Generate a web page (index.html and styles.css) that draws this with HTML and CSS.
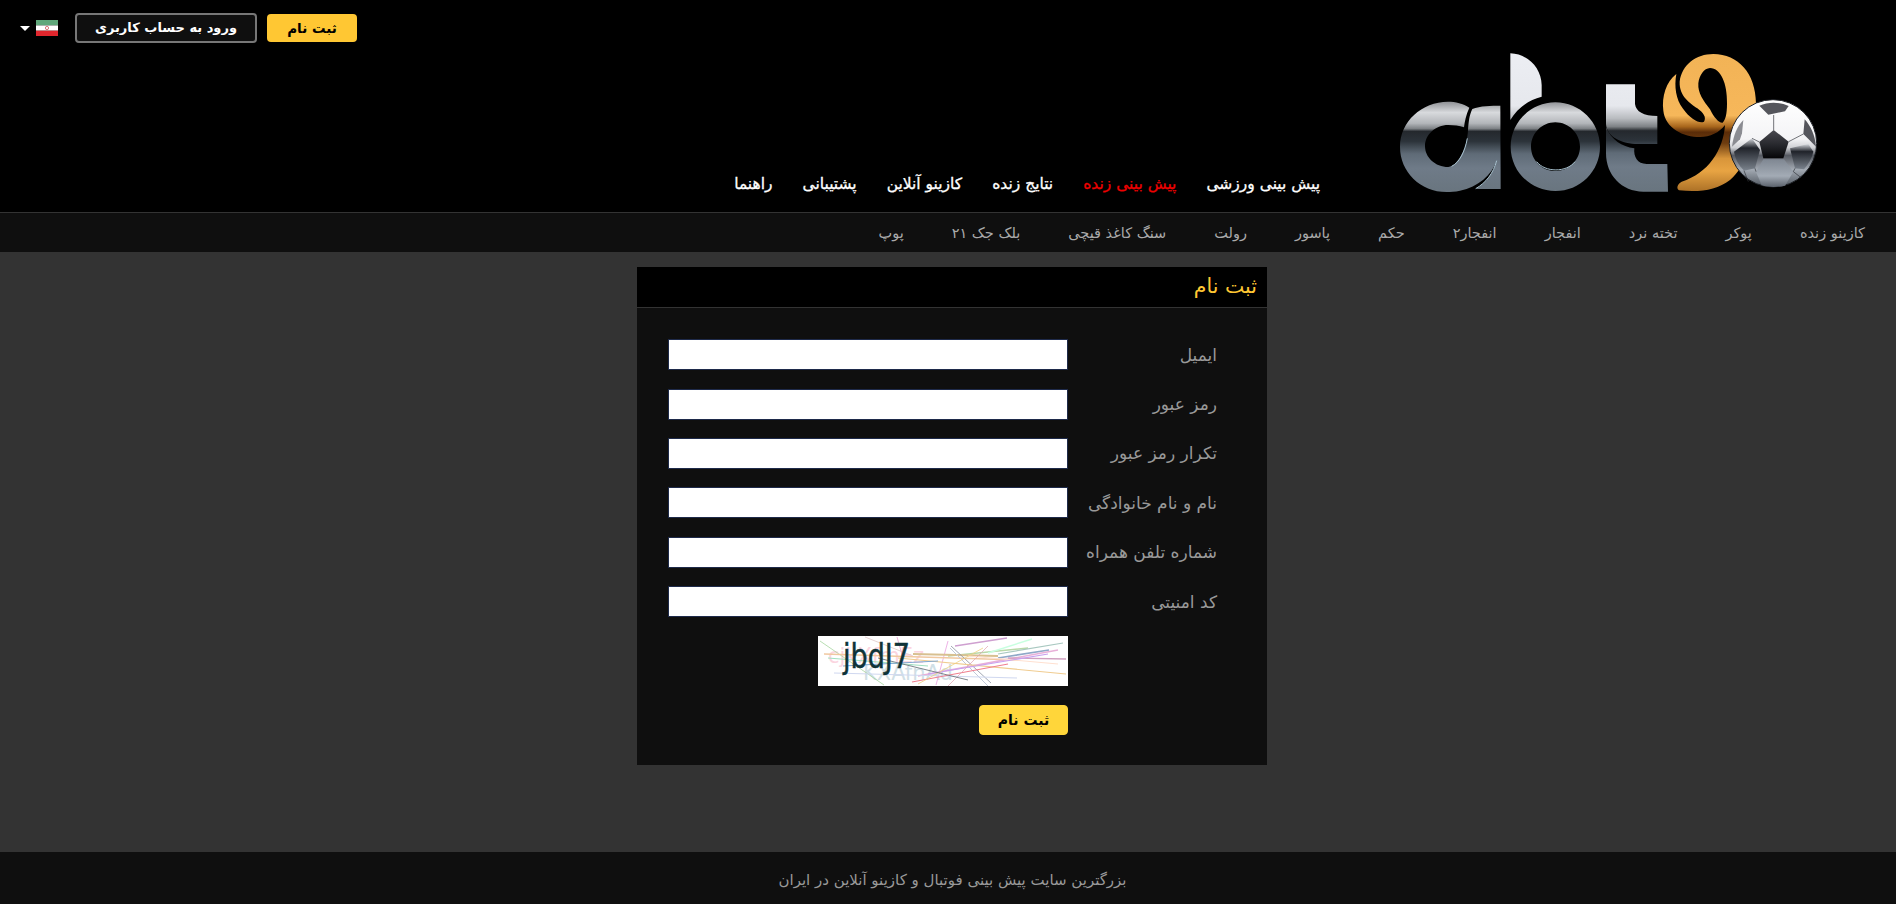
FILE: index.html
```html
<!DOCTYPE html>
<html lang="fa" dir="rtl">

<head>
    <meta charset="UTF-8">
    <title>ثبت نام</title>
    <link rel="stylesheet" href="styles.css">
</head>

<body>
    <header class="top">
        <a class="logo" href="#">
            <svg width="460" height="170" viewBox="0 0 1380 510">
                <defs>
                    <linearGradient id="chrome" gradientUnits="userSpaceOnUse" x1="0" y1="40" x2="0" y2="455">
                        <stop offset="0" stop-color="#eceef3"/>
                        <stop offset="0.38" stop-color="#e6e8ed"/>
                        <stop offset="0.47" stop-color="#b9bcc0"/>
                        <stop offset="0.53" stop-color="#7d8185"/>
                        <stop offset="0.56" stop-color="#24282d"/>
                        <stop offset="0.63" stop-color="#2c333a"/>
                        <stop offset="0.72" stop-color="#5f6b77"/>
                        <stop offset="0.82" stop-color="#6f7b88"/>
                        <stop offset="1" stop-color="#69757f"/>
                    </linearGradient>
                    <linearGradient id="ring" gradientUnits="userSpaceOnUse" x1="0" y1="185" x2="0" y2="455">
                        <stop offset="0" stop-color="#8e9094"/>
                        <stop offset="0.12" stop-color="#d8dadd"/>
                        <stop offset="0.24" stop-color="#b3b6ba"/>
                        <stop offset="0.3" stop-color="#7d8185"/>
                        <stop offset="0.33" stop-color="#24282d"/>
                        <stop offset="0.44" stop-color="#2c333a"/>
                        <stop offset="0.58" stop-color="#5f6b77"/>
                        <stop offset="0.74" stop-color="#6f7b88"/>
                        <stop offset="1" stop-color="#69757f"/>
                    </linearGradient>
                    <linearGradient id="gold" gradientUnits="userSpaceOnUse" x1="0" y1="40" x2="0" y2="455">
                        <stop offset="0" stop-color="#f2b356"/>
                        <stop offset="0.45" stop-color="#f6b75a"/>
                        <stop offset="0.53" stop-color="#a8661c"/>
                        <stop offset="0.57" stop-color="#5a2c08"/>
                        <stop offset="0.65" stop-color="#6e3d10"/>
                        <stop offset="0.76" stop-color="#d8953a"/>
                        <stop offset="0.85" stop-color="#e8a443"/>
                        <stop offset="1" stop-color="#ab7026"/>
                    </linearGradient>
                    <linearGradient id="ballfill" x1="0" y1="0" x2="0" y2="1">
                        <stop offset="0" stop-color="#ffffff"/>
                        <stop offset="0.45" stop-color="#f4f4f6"/>
                        <stop offset="0.55" stop-color="#cfd0d4"/>
                        <stop offset="0.64" stop-color="#565a62"/>
                        <stop offset="0.8" stop-color="#a3aab3"/>
                        <stop offset="1" stop-color="#4e555e"/>
                    </linearGradient>
                    <linearGradient id="patch" x1="0" y1="0" x2="0" y2="1">
                        <stop offset="0" stop-color="#4a4a50"/>
                        <stop offset="0.55" stop-color="#25262b"/>
                        <stop offset="1" stop-color="#050507"/>
                    </linearGradient>
                    <linearGradient id="patch2" x1="0" y1="0" x2="0" y2="1">
                        <stop offset="0" stop-color="#d8dbe0"/>
                        <stop offset="0.3" stop-color="#20232a"/>
                        <stop offset="1" stop-color="#7b838d"/>
                    </linearGradient>
                    <linearGradient id="patch3" x1="0" y1="0" x2="0" y2="1">
                        <stop offset="0" stop-color="#7f8792"/>
                        <stop offset="0.6" stop-color="#a3abb5"/>
                        <stop offset="1" stop-color="#5b626c"/>
                    </linearGradient>
                </defs>

                <!-- a -->
                <path fill="url(#ring)" fill-rule="evenodd" d="M204 185C226 185 250 190 268 203L277 207C300 197 335 197 361 197L362 447L287 447C318 428 340 400 350 362C335 405 295 440 240 452C225 455 212 456 200 456C120 456 60 395 60 320C60 245 125 185 204 185ZM205 255C165 255 135 285 135 318C135 352 165 381 205 381C235 378 262 320 264 270C266 245 268 225 277 207L268 203C258 225 254 245 252 262C238 257 222 255 205 255Z"/>
                <path fill="none" stroke="#a9c3d0" stroke-width="3" d="M287 446C318 428 340 400 350 362M215 379C238 368 255 335 262 295"/>

                <!-- b -->
                <path fill="url(#chrome)" d="M391 40C445 42 484 85 485 135L485 170C445 180 412 205 391 240Z"/>
                <path fill="url(#ring)" fill-rule="evenodd" d="M526 187C600 187 660 247 660 320C660 394 600 453 526 453C452 453 392 394 392 320C392 247 452 187 526 187ZM526 247C486 247 453 280 453 320C453 360 486 393 526 393C566 393 600 360 600 320C600 280 566 247 526 247Z"/>
                <path fill="none" stroke="#a9c3d0" stroke-width="3" d="M470 365C495 398 560 398 585 365"/>

                <!-- t -->
                <path fill="url(#chrome)" d="M678 133H765V192C768 215 790 228 832 228V312H775C725 312 680 290 678 252Z"/>
                <path fill="url(#chrome)" d="M678 262C695 300 725 320 763 325C760 350 772 372 800 372H862L864 455H790C725 455 678 405 678 340Z"/>

                <!-- 9 -->
                <path fill="url(#gold)" fill-rule="evenodd" d="M889 102C858 125 845 170 850 212C856 265 910 291 960 291C990 291 1018 278 1035 255C1030 330 985 400 905 425C892 432 888 445 897 451C960 458 1010 450 1050 420C1100 380 1130 280 1128 190C1127 100 1075 42 1000 42C948 42 905 75 899 125C897 170 932 190 952 205C970 218 980 232 972 245C960 252 932 240 908 205C888 178 882 140 889 102ZM990 84C1022 84 1042 130 1041 190C1041 225 1036 240 1028 248C1018 250 1003 235 990 208C970 182 953 160 955 130C958 105 972 85 990 84Z"/>

                <!-- ball -->
                <circle cx="1179" cy="310" r="131" fill="url(#ballfill)" stroke="#1c1f24" stroke-width="3"/>
                <path fill="url(#patch)" d="M1181 270L1226 305L1210 355H1150L1138 306Z"/>
                <path fill="#55565c" d="M1138 197C1165 185 1198 185 1226 198L1215 214L1165 224Z"/>
                <path fill="#55565c" d="M1274 238C1292 258 1305 285 1308 320L1286 298L1270 282Z"/>
                <path fill="#8b8c92" d="M1090 240C1072 258 1060 285 1056 320L1080 298L1086 280Z"/>
                <path fill="url(#patch2)" d="M1062 335L1116 295L1140 330L1125 385L1092 392C1075 375 1065 355 1062 335Z"/>
                <path fill="url(#patch3)" d="M1150 358H1212L1240 395L1215 437C1190 443 1165 442 1145 436L1128 395Z"/>
                <path fill="url(#patch2)" d="M1230 325L1285 312L1300 335C1296 355 1285 372 1272 388L1245 385Z"/>
                <path fill="none" stroke="#30333a" stroke-width="2" d="M1181 270L1181 225M1226 305L1270 282M1138 306L1116 295M1125 385L1128 395M1240 395L1245 385M1092 392L1105 425M1240 395L1262 412"/>
            </svg>
        </a>

        <nav class="main-nav">
            <a href="#">پیش بینی ورزشی</a>
            <a href="#" class="live">پیش بینی زنده</a>
            <a href="#">نتایج زنده</a>
            <a href="#">کازینو آنلاین</a>
            <a href="#">پشتیبانی</a>
            <a href="#">راهنما</a>
        </nav>

        <div class="actions">
            <a href="#" class="btn btn-yellow">ثبت نام</a>
            <a href="#" class="btn btn-dark">ورود به حساب کاربری</a>
            <svg class="flag" width="22" height="16" viewBox="0 0 22 16">
                <rect width="22" height="5.4" fill="#5fa77a"/>
                <rect y="5.4" width="22" height="5.3" fill="#ffffff"/>
                <rect y="10.7" width="22" height="5.3" fill="#e0262d"/>
                <circle cx="11" cy="8" r="1.6" fill="none" stroke="#d9747a" stroke-width="1"/>
            </svg>
            <span class="caret"></span>
        </div>
    </header>

    <nav class="sub-nav">
        <a href="#">کازینو زنده</a>
        <a href="#">پوکر</a>
        <a href="#">تخته نرد</a>
        <a href="#">انفجار</a>
        <a href="#">انفجار۲</a>
        <a href="#">حکم</a>
        <a href="#">پاسور</a>
        <a href="#">رولت</a>
        <a href="#">سنگ کاغذ قیچی</a>
        <a href="#">بلک جک ۲۱</a>
        <a href="#">پوپ</a>
    </nav>

    <main class="content">
        <section class="card">
            <h1>ثبت نام</h1>
            <form class="reg-form" action="#">
                <div class="row">
                    <label for="email">ایمیل</label>
                    <input id="email" type="text">
                </div>
                <div class="row">
                    <label for="psw">رمز عبور</label>
                    <input id="psw" type="password">
                </div>
                <div class="row">
                    <label for="psw2">تکرار رمز عبور</label>
                    <input id="psw2" type="password">
                </div>
                <div class="row">
                    <label for="fullname">نام و نام خانوادگی</label>
                    <input id="fullname" type="text">
                </div>
                <div class="row">
                    <label for="mobile">شماره تلفن همراه</label>
                    <input id="mobile" type="text">
                </div>
                <div class="row">
                    <label for="code">کد امنیتی</label>
                    <input id="code" type="text">
                </div>
                <div class="row row-captcha">
                    <span class="spacer"></span>
                    <div class="field-end">
                        <svg class="captcha" width="250" height="50" viewBox="0 0 250 50">
                            <rect width="250" height="50" fill="#fff"/>
                            <text x="10" y="27" class="cap-ghost" fill="#fbd5e0">cjkXfmEz</text>
                            <text x="45" y="44" class="cap-ghost" fill="#d0e0e6">KXAfnAd</text>
                            <g fill="none" stroke-width="0.8">
                                <path stroke="#a6d6a0" d="M2 5L66 49"/>
                                <path stroke="#e0c8c8" d="M47 1L95 20"/>
                                <path stroke="#e9a0d0" d="M79 1L85 22"/>
                                <path stroke="#e9a0e0" d="M130 5L118 49"/>
                                <path stroke="#cfa0d0" stroke-width="1.4" d="M137 10L189 2"/>
                                <path stroke="#b8d8a8" stroke-width="1.4" d="M130 20L210 12"/>
                                <path stroke="#c8ffe0" stroke-width="1.4" d="M170 17L214 3"/>
                                <path stroke="#a8c8c0" stroke-width="1.2" d="M180 18L245 7"/>
                                <path stroke="#8fa8c8" stroke-width="1.6" d="M180 22L231 14"/>
                                <path stroke="#f0c8a0" stroke-width="1.6" d="M6 18L200 24"/>
                                <path stroke="#d8c090" stroke-width="2" d="M95 18L180 20"/>
                                <path stroke="#c0c8d8" stroke-width="1" d="M132 12L170 50"/>
                                <path stroke="#8a90a0" d="M133 10L173 47"/>
                                <path stroke="#e8b0d8" stroke-width="1.6" d="M100 40L240 14"/>
                                <path stroke="#d0a0c0" stroke-width="1.4" d="M190 22L248 23"/>
                                <path stroke="#f0cc90" stroke-width="1.2" d="M80 22L248 38"/>
                                <path stroke="#ffe0d0" stroke-width="1.2" d="M150 20L240 28"/>
                                <path stroke="#a0e0c0" stroke-width="1" d="M10 22L110 30"/>
                                <path stroke="#d0d8f0" stroke-width="1" d="M16 37L199 42"/>
                                <path stroke="#f08090" stroke-width="1.2" d="M94 46L190 28"/>
                                <path stroke="#c8a0f0" stroke-width="1.2" d="M110 38L230 18"/>
                                <path stroke="#f0d080" d="M100 48L165 12"/>
                                <path stroke="#e0a0b0" stroke-width="0.7" d="M130 50L170 10"/>
                                <path stroke="#707880" stroke-width="0.9" d="M60 22L150 44"/>
                                <path stroke="#80a8d0" stroke-width="1" d="M25 30L120 25"/>
                            </g>
                            <text x="25" y="32" class="cap-text" textLength="67" lengthAdjust="spacingAndGlyphs">jbdJ7</text>
                        </svg>
                    </div>
                </div>
                <div class="row">
                    <span class="spacer"></span>
                    <div class="field-end">
                        <button type="submit">ثبت نام</button>
                    </div>
                </div>
            </form>
        </section>
    </main>

    <footer class="foot">بزرگترین سایت پیش بینی فوتبال و کازینو آنلاین در ایران</footer>
</body>

</html>
```

FILE: styles.css
```css
html,
body {
    height: 100%;
}

body {
    margin: 0;
    background-color: #333333;
    font-family: "DejaVu Sans", sans-serif;
    display: flex;
    flex-direction: column;
}

a {
    text-decoration: none;
}

.top {
    background-color: #000;
    height: 212px;
    display: flex;
    padding-right: 56px;
    padding-left: 20px;
}

.logo {
    display: block;
    height: 170px;
    margin-top: 40px;
}

.logo svg {
    display: block;
}

.main-nav {
    flex: 1;
    display: flex;
    align-items: flex-end;
    gap: 30px;
    margin-right: 60px;
    padding-bottom: 18px;
    font-size: 15.5px;
    line-height: 20px;
}

.main-nav a {
    color: #fff;
    -webkit-text-stroke: 0.3px #fff;
}

.main-nav a.live {
    color: #f00000;
    -webkit-text-stroke-color: #f00000;
}

.actions {
    display: flex;
    align-items: center;
    align-self: flex-start;
    height: 30px;
    margin-top: 13px;
}

.btn {
    display: block;
    box-sizing: border-box;
    font-weight: bold;
    text-align: center;
}

.btn-yellow {
    width: 90px;
    height: 28px;
    line-height: 28px;
    font-size: 13.5px;
    background-color: #ffc733;
    color: #000;
    border-radius: 4px;
}

.btn-dark {
    width: 182px;
    height: 30px;
    line-height: 26px;
    margin-right: 10px;
    font-size: 13px;
    background-color: #0f0f0f;
    color: #fff;
    border: 2px solid #777;
    border-radius: 4px;
}

.flag {
    margin-right: 17px;
}

.caret {
    width: 0;
    height: 0;
    margin-right: 6px;
    margin-top: 1px;
    border-top: 5px solid #fff;
    border-left: 5px solid transparent;
    border-right: 5px solid transparent;
}

.sub-nav {
    background-color: #0f0f0f;
    border-top: 1px solid #333;
    height: 39px;
    display: flex;
    align-items: center;
    gap: 48px;
    padding-right: 31px;
    font-size: 14.5px;
}

.sub-nav a {
    color: #aaa;
}

.content {
    flex: 1;
    display: flex;
    justify-content: center;
    align-items: flex-start;
    padding: 15px 0 0 8px;
}

.card {
    width: 630px;
    background-color: #0f0f0f;
}

h1 {
    margin: 0;
    height: 40px;
    line-height: 38px;
    padding-right: 10px;
    background-color: #000;
    border-bottom: 1px solid #333;
    color: #ffc733;
    font-size: 20.5px;
    font-weight: normal;
}

.reg-form {
    display: flex;
    flex-direction: column;
    gap: 18.4px;
    padding: 31.2px 0 30.4px;
}

.row {
    display: flex;
    align-items: center;
}

.row-captcha {
    margin-bottom: 0.6px;
}

.row label,
.spacer {
    display: block;
    width: 149px;
    padding-right: 50px;
    color: #999;
    font-size: 17px;
    white-space: nowrap;
}

.row input {
    box-sizing: border-box;
    width: 400px;
    height: 31px;
    background-color: #fff;
    border: 1px solid #1e2a4a;
    outline: none;
}

.field-end {
    width: 400px;
    display: flex;
    justify-content: flex-start;
}

.captcha {
    display: block;
    direction: ltr;
}

.cap-text {
    font-family: "DejaVu Sans", sans-serif;
    font-size: 34px;
    fill: #0e3338;
    stroke: #0e3338;
    stroke-width: 0.5px;
}

.cap-ghost {
    font-family: "DejaVu Sans", sans-serif;
    font-size: 21px;
}

button {
    width: 89px;
    height: 30px;
    border: 1px solid #ffd63a;
    border-radius: 4px;
    background-color: #ffd63a;
    color: #000;
    font-family: "DejaVu Sans", sans-serif;
    font-size: 14px;
    font-weight: bold;
    cursor: pointer;
}

.foot {
    background-color: #0f0f0f;
    height: 52px;
    line-height: 56px;
    padding-left: 9px;
    text-align: center;
    color: #999;
    font-size: 15px;
}
```
